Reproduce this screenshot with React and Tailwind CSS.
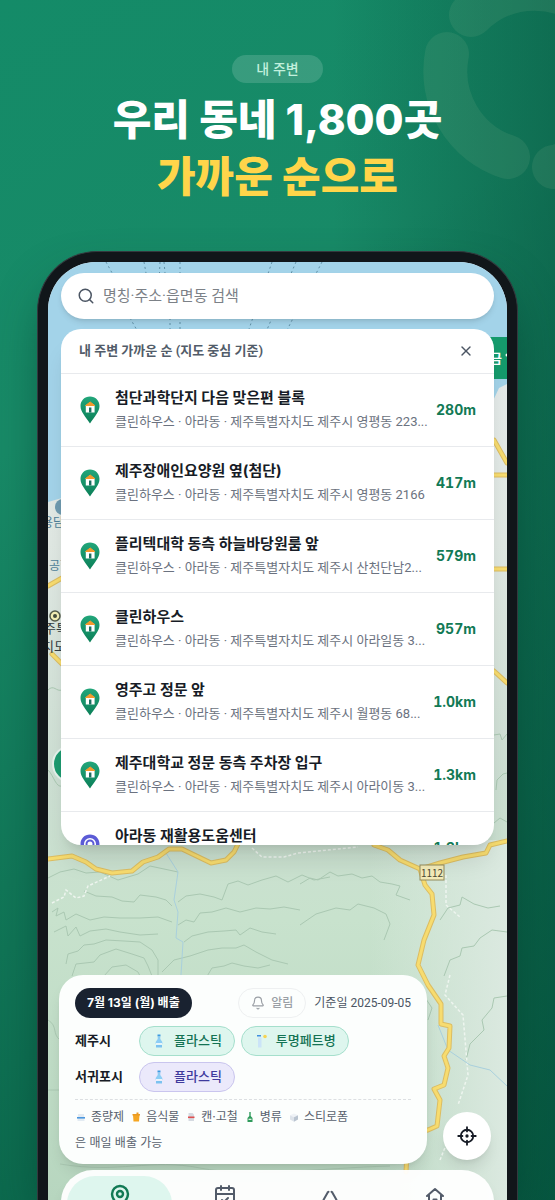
import React, { useState } from 'react';
import { Search, X, Bell, MapPin, CalendarCheck } from 'lucide-react';

const places = [
  { name: '첨단과학단지 다음 맞은편 블록', addr: '클린하우스 · 아라동 · 제주특별자치도 제주시 영평동 223...', distance: '280m' },
  { name: '제주장애인요양원 옆(첨단)', addr: '클린하우스 · 아라동 · 제주특별자치도 제주시 영평동 2166', distance: '417m' },
  { name: '플리텍대학 동측 하늘바당원룸 앞', addr: '클린하우스 · 아라동 · 제주특별자치도 제주시 산천단남2...', distance: '579m' },
  { name: '클린하우스', addr: '클린하우스 · 아라동 · 제주특별자치도 제주시 아라일동 3...', distance: '957m' },
  { name: '영주고 정문 앞', addr: '클린하우스 · 아라동 · 제주특별자치도 제주시 월평동 68...', distance: '1.0km' },
  { name: '제주대학교 정문 동측 주차장 입구', addr: '클린하우스 · 아라동 · 제주특별자치도 제주시 아라이동 3...', distance: '1.3km' },
  { name: '아라동 재활용도움센터', addr: '재활용도움센터 · 아라동 · 제주특별자치도 제주시', distance: '1.3km', center: true },
];

// Pin shown in front of each place
const PlacePin = ({ center }) => (
  <svg viewBox="0 0 20 28" className="h-7 w-5 shrink-0" aria-hidden="true">
    <defs>
      <linearGradient id="pinGreen" x1="0" y1="0" x2="0" y2="1">
        <stop offset="0" stopColor="#22a67a" />
        <stop offset="1" stopColor="#0b7f58" />
      </linearGradient>
    </defs>
    <path
      d="M10 0.5C4.5 0.5 0.5 4.7 0.5 10c0 5.8 5 10.5 9.5 17.5C14.5 20.5 19.5 15.8 19.5 10 19.5 4.7 15.5 0.5 10 0.5z"
      fill={center ? '#5b5bd6' : 'url(#pinGreen)'}
    />
    {center ? (
      <>
        <circle cx="10" cy="10" r="6" fill="#fff" />
        <circle cx="10" cy="10" r="3.5" fill="none" stroke="#5b5bd6" strokeWidth="2" />
      </>
    ) : (
      <>
        <path d="M5.8 9h8.8v7.5H5.8z" fill="#fff" />
        <path d="M9 11.5h2.4v5H9z" fill="#1b6f60" />
        <path d="M10.2 6 14.8 9.5H5.6z" fill="#f59a2e" stroke="#f59a2e" strokeLinejoin="round" />
      </>
    )}
  </svg>
);

const BottleIcon = () => (
  <svg viewBox="0 0 14 16" className="h-4 w-3.5" aria-hidden="true">
    <path d="M5.5 1.5h3v2h-3z" fill="#3c9be0" />
    <path d="M5.7 4h2.6v2l2 3v2H3.7V9l2-3z" fill="#8ccdf5" />
    <path d="M4 10h6v1.5H4z" fill="#e8f5fd" />
    <path d="M4 12h6v2.5H4z" fill="#7cc2f0" />
  </svg>
);

const PetIcon = () => (
  <svg viewBox="0 0 14 16" className="h-4 w-3.5" aria-hidden="true">
    <path d="M3 2h4v1.5H3z" fill="#3f8fe0" />
    <path d="M4 4.5h3.5v10H4z" fill="#cbe4f8" />
    <circle cx="11" cy="3.5" r="1.8" fill="#f6d453" />
  </svg>
);

const BagIcon = () => (
  <svg viewBox="0 0 12 12" className="size-3" aria-hidden="true">
    <path d="M3 3h6l.5 7h-7z" fill="#e3ebf2" />
    <path d="M2 6h8v1.6H2z" fill="#4b97de" />
  </svg>
);

const FoodIcon = () => (
  <svg viewBox="0 0 12 12" className="size-3" aria-hidden="true">
    <path d="M3 4h6.5L9 10.5H3.5z" fill="#f5a623" />
    <path d="M2.5 3h4V1.5h2V3H10v1.5H2.5z" fill="#e99a24" />
  </svg>
);

const CanIcon = () => (
  <svg viewBox="0 0 12 12" className="size-3" aria-hidden="true">
    <path d="M3.5 2h4L9 3.5V10H3.5z" fill="#d5dae1" />
    <path d="M3 5.5h6.5v1.6H3z" fill="#df4f4f" />
  </svg>
);

const GlassIcon = () => (
  <svg viewBox="0 0 12 12" className="size-3" aria-hidden="true">
    <path d="M5.3 1h1.4v4L8.5 7v4h-5V7l1.8-2z" fill="#2e9a5b" />
    <path d="M4.5 7.7h3V9h-3z" fill="#dff3e5" />
  </svg>
);

const FoamIcon = () => (
  <svg viewBox="0 0 12 12" className="size-3" aria-hidden="true">
    <path d="M6 2.5 10 4.2 6 6.2 2 4.2z" fill="#eef2f6" />
    <path d="M2 4.2 6 6.2v4.5L2 8.6z" fill="#dde3ea" />
    <path d="M10 4.2 6 6.2v4.5l4-2.1z" fill="#b9c4d0" />
  </svg>
);

const LocateIcon = () => (
  <svg viewBox="0 0 24 24" className="size-5" fill="none" stroke="currentColor" strokeWidth="2.2" strokeLinecap="round" aria-hidden="true">
    <circle cx="12" cy="12" r="7.5" />
    <circle cx="12" cy="12" r="2" fill="currentColor" stroke="none" />
    <path d="M12 1.5v5M12 17.5v5M1.5 12h5M17.5 12h5" />
  </svg>
);

const RecycleIcon = () => (
  <svg viewBox="0 0 24 24" className="size-6" fill="none" stroke="currentColor" strokeWidth="2" strokeLinecap="round" strokeLinejoin="round" aria-hidden="true">
    <path d="M6 15 9.7 8.4M18 15 14.3 8.4M9.7 8.4l.8-.6M14.300 8.400l-.8-.6M6 15 4 19c-.6 1.500.2 3 2 3h3M18 15 20 19c.6 1.500-.2 3-2 3h-4" />
  </svg>
);

const HomeIcon = () => (
  <svg viewBox="0 0 24 24" className="size-6" fill="none" stroke="currentColor" strokeWidth="2" strokeLinecap="round" strokeLinejoin="round" aria-hidden="true">
    <path d="M4 12 12 5l8 7M6 11v9a1.5 1.5 0 0 0 1.5 1.5h9A1.5 1.5 0 0 0 18 20v-9M10.5 21v-5.500h3V21" />
  </svg>
);

// Faint ring of rounded segments in the top corner
const CornerRing = () => (
  <svg viewBox="0 0 155 200" className="absolute top-0 right-0 w-[155px]" fill="none" stroke="#8fb894" strokeOpacity="0.13" strokeWidth="44" strokeLinecap="round" aria-hidden="true">
    <path d="M71 15A90 90 0 0 1 198 15" />
    <path d="M47 54A90 90 0 0 0 108 157" />
    <path d="M154 167A90 90 0 0 0 220 105" />
  </svg>
);

const contours = [
  'M48 878 60 872 74 869 86 873 100 872 118 880 138 874 150 866 164 869 178 872',
  'M84 891 96 896 112 897 122 901 134 902 140 895 156 897 166 900 172 906',
  'M178 902 186 896 200 894 214 897 222 900 228 884 238 881 248 885 262 880 276 876 288 882 302 875 314 880 330 877',
  'M52 912 58 908 56 916 64 912 66 920 76 914 90 920 104 917 120 918 140 918 158 917 172 922',
  'M178 925 186 920 194 922 200 913 212 912 226 908 240 912 256 908 270 909 284 907 300 910',
  'M54 932 66 926 68 936 76 927 80 936 90 931 106 929 120 932 140 935 158 934',
  'M184 942 192 936 208 932 224 931 236 930 240 935 250 928 262 932 276 934',
  'M66 964 68 954 78 951 84 945 94 944 106 940 124 941 140 942 152 950 158 960 158 976',
  'M72 976 76 964 94 962 100 955 116 949 132 954 144 958 148 966 152 976',
  'M104 976 112 967 126 965 138 972 140 976',
  'M162 972 174 960 190 956 208 950 222 948 236 948 244 945 256 952 272 960 288 964',
  'M206 978 212 968 224 966 232 963 244 966 258 968 270 965',
  'M300 884 310 878 318 880 330 872 338 876 352 874 362 878 372 876 380 882 392 884 400 886 396 895 410 900',
  'M300 925 316 914 336 908 350 910 358 904 374 908 386 914 390 924 384 940',
  'M440 920 448 908 460 905 462 897 474 904 488 908 500 906',
  'M444 976 450 960 460 956 462 948 474 946 480 938 492 930 507 932',
  'M466 1060 470 1044 484 1030 482 1020 492 1008 494 998 507 996',
  'M428 1020 432 1008 424 996',
  'M494 735 500 734 502 740 507 734M496 790 497 780 503 774 507 773M494 823 500 818 507 822',
];

const roads = [
  'M48 859 72 856 86 862 96 869 112 873 132 871 143 862 158 857 169 849 182 849 211 863 226 860 234 852 241 838',
  'M374 845 388 850 400 860 420 869 425 885 432 894 434 915 424 940 418 965 428 985 441 1004 441 1024 450 1026 449 1048 444 1056 448 1068 444 1085 434 1089 440 1100 437 1126 428 1130 408 1134 406 1172',
  'M424 868 440 863 463 857 486 853 490 845 507 841',
  'M494 440 507 463M494 475h13M494 569h13M494 671 507 683M48 586 62 578M52 654l10 10',
];

const MapBackground = () => (
  <svg
    viewBox="48 262 459 938"
    preserveAspectRatio="xMidYMin slice"
    className="absolute inset-0 h-full w-full font-['Noto_Sans_CJK_KR',sans-serif]"
    aria-hidden="true"
  >
    <defs>
      <linearGradient id="land" x1="0" y1="0" x2="0" y2="1">
        <stop offset="0" stopColor="#e8ecee" />
        <stop offset="0.3" stopColor="#e0e8e3" />
        <stop offset="0.55" stopColor="#cddfd3" />
        <stop offset="0.7" stopColor="#c8e2cd" />
        <stop offset="1" stopColor="#b7d6bf" />
      </linearGradient>
      <linearGradient id="slope" x1="0" y1="0" x2="1" y2="0">
        <stop offset="0.7" stopColor="#dbe9e0" stopOpacity="0" />
        <stop offset="1" stopColor="#dbe9e0" />
      </linearGradient>
    </defs>
    <rect x="48" y="262" width="459" height="938" fill="url(#land)" />
    <rect x="48" y="840" width="459" height="360" fill="url(#slope)" />
    <path d="M48 262h459v122l-8 4-28 60H80l-18 50-14 4z" fill="#a3d3e9" />

    {/* ferry routes */}
    <path
      d="M106 262 116 280M144 262l4 22M160 262l-1 22M164 262l2 22M180 262v70M170 318v14M272 262l-24 70M296 262l-30 70M322 262l-36 70M130 318l8 14"
      stroke="#5f8fa5"
      strokeDasharray="2 3"
      fill="none"
    />

    {/* contour lines */}
    <g stroke="#aac8b2" fill="none">
      {contours.map((d) => (
        <path key={d} d={d} />
      ))}
      <path d="M48 690c6-6 8 2 14 0M48 770c6 6 8 18 14 16M48 1020c10 6 4 14 12 20M48 1090h12M60 1164c60 10 90-6 140 4s120 0 190-2" />
    </g>

    {/* trails and streams */}
    <g fill="none">
      <path
        d="M52 903 64 897 66 890 76 898 84 896 88 886 110 876M252 848l10 9 22 0 14-4 60-6M446 875v30l14 12M450 975l-5 20 18 20 5 60-10 30M440 1160l8-20"
        stroke="#eef5ef"
        strokeWidth="1.5"
        strokeDasharray="3 2"
      />
      <path d="M166 853 178 872 174 900 178 912 176 938 183 942 181 975M438 1025 448 1050 470 1065 490 1070 507 1086" stroke="#a9d0dd" />
    </g>

    {/* roads */}
    <g fill="none" strokeLinecap="round" strokeLinejoin="round">
      {roads.map((d) => (
        <g key={d}>
          <path d={d} stroke="#dcbd62" strokeWidth="5" />
          <path d={d} stroke="#f7dc6f" strokeWidth="3" />
        </g>
      ))}
    </g>
    <rect x="420" y="865" width="24" height="15" fill="#f3ebb8" stroke="#948b5c" />
    <text x="432" y="877" textAnchor="middle" fontSize="10" fill="#4c4a34">1112</text>

    {/* labels along the edges */}
    <circle cx="63" cy="507" r="8" fill="#6f9bb0" />
    <g fill="#4d7f99" fontSize="12">
      <text x="42" y="527">용담</text>
      <text x="49" y="570">공항</text>
    </g>
    <circle cx="55" cy="616" r="5" fill="#f5efb5" stroke="#555b4a" strokeWidth="1.5" />
    <circle cx="55" cy="616" r="2" fill="#454b3c" />
    <g fill="#333c40" fontSize="13">
      <text x="44" y="633">주특</text>
      <text x="42" y="651">치도</text>
    </g>
    <circle cx="71" cy="764" r="18" fill="#1d9b70" stroke="#e6f2ec" strokeWidth="2" />
    <rect x="480" y="337" width="27" height="42" fill="#159a6c" />
    <text x="490" y="363" fontSize="13" fontWeight="700" fill="#fff">금</text>
    <circle cx="507" cy="355" r="1.5" fill="#fff" />
  </svg>
);

const WasteChip = ({ icon, children, violet }) => (
  <li
    className={`flex h-[30px] items-center gap-2 rounded-full border px-3 text-[13px] font-medium ${
      violet ? 'border-[#c9c5ee] bg-[#ebe9fb] text-[#3f3a9e]' : 'border-[#a5dfcc] bg-[#def6ee] text-[#147354]'
    }`}
  >
    {icon}
    {children}
  </li>
);

const daily = [
  { label: '종량제', icon: <BagIcon /> },
  { label: '음식물', icon: <FoodIcon /> },
  { label: '캔·고철', icon: <CanIcon /> },
  { label: '병류', icon: <GlassIcon /> },
  { label: '스티로폼', icon: <FoamIcon /> },
];

function App() {
  const [query, setQuery] = useState('');
  const [listOpen, setListOpen] = useState(true);

  return (
    <div className="relative flex h-screen flex-col overflow-hidden bg-linear-150 from-[#148b68] via-[#188a67] via-30% to-[#075c43] font-['Inter','Noto_Sans_CJK_KR',sans-serif]">
      <div className="absolute inset-0 bg-linear-to-r from-transparent from-60% to-[#06503c]/50" />
      <CornerRing />

      <header className="relative flex flex-col items-center pt-[55px] text-center">
        <span className="flex h-7 items-center rounded-full bg-white/15 px-6 text-sm font-medium text-[#c2f0dd]">
          내 주변
        </span>
        <h1 className="mt-2 text-[42px] leading-[57px] font-extrabold text-white">
          우리 동네 1,800곳
          <br />
          <span className="text-[#ffd54a]">가까운 순으로</span>
        </h1>
      </header>

      {/* Phone */}
      <div className="relative mx-[37px] mt-[46px] min-h-0 flex-1 rounded-t-[60px] border border-b-0 border-[#33393e] bg-[#11161a] px-2.5 pt-2.5 shadow-2xl shadow-[#033b2b]/70">
        <div className="relative h-full overflow-hidden rounded-t-[48px]">
          <MapBackground />

          <main className="relative px-[13px] pt-[11px]">
            <label className="flex h-[46px] items-center gap-2 rounded-full bg-white px-4 shadow-md">
              <Search className="size-[18px] text-[#4b5563]" strokeWidth={2} />
              <input
                type="text"
                value={query}
                onChange={(e) => setQuery(e.target.value)}
                placeholder="명칭·주소·읍면동 검색"
                aria-label="명칭·주소·읍면동 검색"
                className="min-w-0 flex-1 font-['Roboto','Noto_Sans_CJK_KR',sans-serif] text-[15px] outline-none placeholder:text-[#7c8187]"
              />
            </label>

            {listOpen && (
              <section className="mt-2.5 h-[516px] overflow-hidden rounded-[20px] bg-white shadow-xl">
                <div className="flex h-[45px] items-center justify-between border-b border-[#e8eaed] pr-5 pl-[18px]">
                  <h2 className="font-['Roboto','Noto_Sans_CJK_KR',sans-serif] text-[13px] font-bold text-[#525c69]">
                    내 주변 가까운 순 (지도 중심 기준)
                  </h2>
                  <button type="button" aria-label="닫기" onClick={() => setListOpen(false)}>
                    <X className="size-4 text-[#4b5563]" strokeWidth={2} />
                  </button>
                </div>
                <ul>
                  {places.map((place) => (
                    <li key={place.name} className="flex h-[73px] items-center border-b border-[#e8eaed] pr-[18px] pl-[19px]">
                      <PlacePin center={place.center} />
                      <div className="ml-[15px] min-w-0 flex-1">
                        <p className="truncate text-[15px] leading-6 font-bold text-[#171c26]">{place.name}</p>
                        <p className="truncate font-['Roboto','Noto_Sans_CJK_KR',sans-serif] text-[13px] leading-6 text-[#6b7280]">{place.addr}</p>
                      </div>
                      <span className="ml-1 text-sm font-bold text-[#127a55] tabular-nums">{place.distance}</span>
                    </li>
                  ))}
                </ul>
              </section>
            )}
          </main>

          <div className="relative mt-[130px] flex items-end gap-4 pr-4 pl-[11px]">
            <section className="flex-1 rounded-3xl bg-[#fcfefd] px-4 pt-[13px] pb-2 shadow-lg">
              <div className="flex items-center">
                <h2 className="flex h-[30px] items-center rounded-full bg-[#192230] px-3 text-xs font-bold text-white">
                  7월 13일 (월) 배출
                </h2>
                <button type="button" className="ml-auto flex h-[30px] items-center gap-1.5 rounded-full border border-[#eef0f1] px-3 text-xs font-medium text-[#9a9fa5]">
                  <Bell className="size-3.5" />
                  알림
                </button>
                <span className="ml-2 font-['Roboto','Noto_Sans_CJK_KR',sans-serif] text-xs text-[#4b5563]">기준일 2025-09-05</span>
              </div>
              <div className="mt-2 flex items-center">
                <h3 className="w-16 text-[13px] font-bold text-[#171c26]">제주시</h3>
                <ul className="flex gap-1.5">
                  <WasteChip icon={<BottleIcon />}>플라스틱</WasteChip>
                  <WasteChip icon={<PetIcon />}>투명페트병</WasteChip>
                </ul>
              </div>
              <div className="mt-1.5 flex items-center">
                <h3 className="w-16 text-[13px] font-bold text-[#171c26]">서귀포시</h3>
                <ul className="flex gap-1.5">
                  <WasteChip icon={<BottleIcon />} violet>
                    플라스틱
                  </WasteChip>
                </ul>
              </div>
              <div className="mt-[7px] border-t border-dashed border-[#dcdfe2] pt-1 text-xs leading-[26px] text-[#59616d]">
                <ul className="flex gap-1.5">
                  {daily.map((item) => (
                    <li key={item.label} className="flex items-center gap-1">
                      {item.icon}
                      {item.label}
                    </li>
                  ))}
                </ul>
                <p>은 매일 배출 가능</p>
              </div>
            </section>
            <button type="button" aria-label="현재 위치" className="mb-1 flex size-12 items-center justify-center rounded-full bg-white text-[#171c26] shadow-lg">
              <LocateIcon />
            </button>
          </div>

          <nav className="relative mx-[13px] mt-1.5 grid h-20 grid-cols-4 rounded-[32px] bg-white/95 p-1.5 text-[#525b69] shadow-lg">
            <a href="#map" aria-label="지도" className="flex justify-center rounded-[28px] bg-[#def6ee] pt-2 text-[#127a55]">
              <MapPin className="size-6" strokeWidth={2.4} />
            </a>
            <a href="#calendar" aria-label="달력" className="flex justify-center pt-2">
              <CalendarCheck className="size-6" />
            </a>
            <a href="#recycle" aria-label="분리배출" className="flex justify-center pt-2">
              <RecycleIcon />
            </a>
            <a href="#home" aria-label="홈" className="flex justify-center pt-2">
              <HomeIcon />
            </a>
          </nav>
        </div>
      </div>
    </div>
  );
}

export default App;
